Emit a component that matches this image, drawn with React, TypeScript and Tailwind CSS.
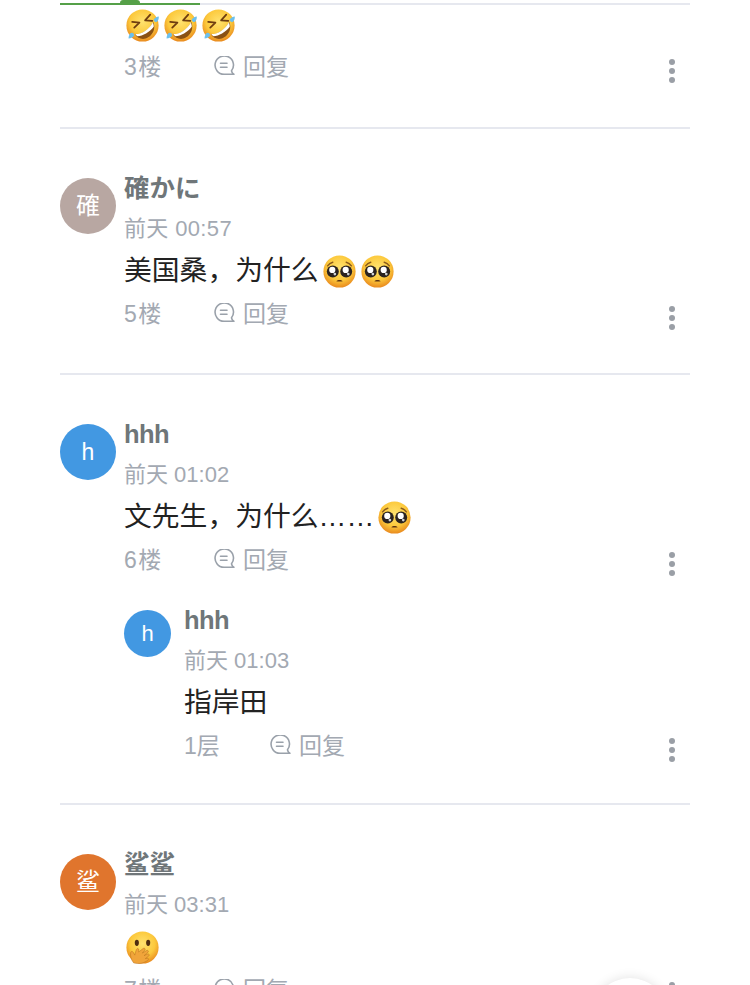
import { useId } from "react";

const FONT = "font-['Liberation_Sans','Noto_Sans_CJK_SC',sans-serif]";

function EmojiFace({ children }: { children: React.ReactNode }) {
    const id = useId();
    return (
        <svg viewBox="0 0 32 32" className="inline-block h-[33px] w-[33px] shrink-0">
            <defs>
                <radialGradient id={id} cx="50%" cy="38%" r="62%">
                    <stop offset="0%" stopColor="#ffe26f" />
                    <stop offset="62%" stopColor="#fcc93c" />
                    <stop offset="100%" stopColor="#e98a1e" />
                </radialGradient>
            </defs>
            <circle cx="16" cy="16" r="15.6" fill={`url(#${id})`} />
            {children}
        </svg>
    );
}

function Rofl() {
    return (
        <EmojiFace>
            <path d="M6 12.500l7 .6-5 5" fill="none" stroke="#6e3d10" strokeWidth="1.700" strokeLinecap="round" strokeLinejoin="round" />
            <path d="M23.500 5.500l-5 5.500 7 .5" fill="none" stroke="#6e3d10" strokeWidth="1.700" strokeLinecap="round" strokeLinejoin="round" />
            <path d="M8.500 24.500C15 25 23 19.500 26.500 12.500c2.500 6-.2 12-5 15-4.500 2.800-10 1.500-13-3z" fill="#8a5114" />
            <path d="M9 24.300C15.500 24.500 22.500 19.500 26 13c.8 1.800 1 3.200.9 4.300C22.800 22.500 16.500 26.200 11 26.500c-.8-.6-1.500-1.300-2-2.200z" fill="#fff" />
            <path d="M27 10c1.300-1.700 3-2.600 4.800-2.800.2 2-.4 4.300-2.100 5.300-1.400.7-3.200-1-2.700-2.500z" fill="#6cc0ee" />
            <path d="M5.500 23c1.400 0 2.500 1.300 2.200 2.700-.4 1.600-3 2.900-5.200 2.900-.2-2 1.200-5.600 3-5.600z" fill="#6cc0ee" />
        </EmojiFace>
    );
}

function Pleading() {
    return (
        <EmojiFace>
            <path d="M4.500 10.500c1.200-1.800 3-3 5-3.500 M27.500 10.500c-1.200-1.800-3-3-5-3.500" fill="none" stroke="#8a5a1c" strokeWidth="1.400" strokeLinecap="round" />
            <circle cx="9.500" cy="16" r="5.800" fill="#2b2320" />
            <circle cx="22.500" cy="16" r="5.800" fill="#2b2320" />
            <circle cx="9" cy="14.500" r="3" fill="#fff" />
            <circle cx="22" cy="14.500" r="3" fill="#fff" />
            <circle cx="11.500" cy="18.500" r="1.300" fill="#cfd3d6" />
            <circle cx="24.500" cy="18.500" r="1.300" fill="#cfd3d6" />
            <path d="M12.800 25.500c1.800-1.800 4.600-1.800 6.400 0-2 .4-4.400.4-6.400 0z" fill="#5e3210" />
        </EmojiFace>
    );
}

function HandOverMouth() {
    return (
        <EmojiFace>
            <ellipse cx="10.500" cy="11.500" rx="2" ry="3" fill="#4e2d10" />
            <ellipse cx="21.500" cy="11.500" rx="2" ry="3" fill="#4e2d10" />
            <path d="M7.500 31c-2.500-3-3.500-7-3-10 .3-1.500 2-1.500 2.600-.2l1.400 2.600c.5-2 1-4 1.600-5.500.6-1.400 2.400-1 2.300.5l-.2 2 4.500-3.500c1.200-.8 2.500.5 1.600 1.700l-2.500 2.800 4.200-2.500c1.300-.6 2.300.8 1.300 1.900l-3.800 3.100 3.600-1.600c1.300-.4 2 1 1 1.900l-3.400 2.600 2-.4c1.200-.1 1.500 1.300.5 1.900-2 1.500-5 3.100-8 3.200-2.500.1-4.400-.2-5.700-.5z" fill="#f0a43a" stroke="#b9701f" strokeWidth=".5" />
        </EmojiFace>
    );
}

function ReplyIcon() {
    return (
        <svg viewBox="0 0 22 20" className="-mt-[3px] h-5 w-[22px] shrink-0" fill="none" stroke="#9aa1aa" strokeWidth="1.600" strokeLinecap="round" strokeLinejoin="round">
            <path d="M18.500 14.800A9.200 9.200 0 1 0 11 18.300h10l-1.500-1.200c-.5-.6-.7-1.400-1-2.300z" />
            <path d="M7.500 7.300h6.500 M7.500 11.300h6.500" />
        </svg>
    );
}

function MoreDots() {
    return (
        <div className="mr-[15px] mt-[8px] flex flex-col gap-[3px]">
            <span className="h-1.5 w-1.5 rounded-full bg-[#9a9fa6]" />
            <span className="h-1.5 w-1.5 rounded-full bg-[#9a9fa6]" />
            <span className="h-1.5 w-1.5 rounded-full bg-[#9a9fa6]" />
        </div>
    );
}

function CommentFooter({ floor, nested }: { floor: string; nested?: boolean }) {
    return (
        <div className="flex h-11 items-center justify-between">
            <div className="flex items-center text-[23px] text-[#a3a9b2]">
                <span className={nested ? "w-[85px]" : "w-[89px] tracking-[1.5px]"}>{floor}</span>
                <ReplyIcon />
                <span className="ml-2">回复</span>
            </div>
            <MoreDots />
        </div>
    );
}

interface CommentBodyProps {
    name: React.ReactNode;
    time: React.ReactNode;
    floor: string;
    nested?: boolean;
    children: React.ReactNode;
}

function CommentBody({ name, time, floor, nested, children }: CommentBodyProps) {
    return (
        <div className="min-w-0 flex-1">
            <div className="flex h-[39px] items-center text-[25.500px] font-bold text-[#6f7679]">{name}</div>
            <div className="flex h-[41px] items-center pb-px text-[22px] text-[#a3a9b2]">{time}</div>
            <div className="flex h-11 items-center text-[27.800px] text-[#222]">{children}</div>
            <div className="-mt-px">
                <CommentFooter floor={floor} nested={nested} />
            </div>
        </div>
    );
}

const HHH = <span className="tracking-[-0.6px]">hhh</span>;

export default function App() {
    return (
        <div className={`relative h-[985px] w-[750px] overflow-hidden bg-white ${FONT}`}>
            <div className="px-[60px]">
                {/* Tab underline, mostly scrolled out of view */}
                <div className="relative mt-[3px] h-0.5 bg-[#e6e8ef]">
                    <div className="h-0.5 w-[140px] bg-[#55a048]" />
                    <div className="absolute left-[60px] top-[-3px] h-[3px] w-5 rounded-t-full bg-[#55a048]" />
                </div>

                <div className="border-b-2 border-[#e6e8ef] pb-[38px] pl-16">
                    <div className="ml-0.5 flex h-10 items-center gap-[5px] pt-px">
                        <Rofl />
                        <Rofl />
                        <Rofl />
                    </div>
                    <CommentFooter floor="3楼" />
                </div>

                <div className="flex border-b-2 border-[#e6e8ef] pb-[37px] pt-10">
                    <div className="mr-2 mt-[9px] flex h-14 w-14 shrink-0 items-center justify-center rounded-full bg-[#b8a7a2] text-2xl text-white">
                        確
                    </div>
                    <CommentBody
                        name="確かに"
                        time={<span className="tracking-[0.35px]">前天 00:57</span>}
                        floor="5楼"
                    >
                        美国桑，为什么
                        <span className="ml-1 flex gap-[5px]">
                            <Pleading />
                            <Pleading />
                        </span>
                    </CommentBody>
                </div>

                <div className="border-b-2 border-[#e6e8ef] pb-[35px] pt-10">
                    <div className="flex">
                        <div className="mr-2 mt-[9px] flex h-14 w-14 shrink-0 items-center justify-center rounded-full bg-[#4298e2] text-[23px] text-white">
                            h
                        </div>
                        <CommentBody name={HHH} time="前天 01:02" floor="6楼">
                            文先生，为什么……
                            <span className="ml-1 flex">
                                <Pleading />
                            </span>
                        </CommentBody>
                    </div>
                    {/* Reply nested under 6楼 */}
                    <div className="mt-[19px] flex pl-16">
                        <div className="mr-[13px] mt-[9px] flex h-[47px] w-[47px] shrink-0 items-center justify-center rounded-full bg-[#4298e2] text-[22px] text-white">
                            h
                        </div>
                        <CommentBody name={HHH} time="前天 01:03" floor="1层" nested>
                            指岸田
                        </CommentBody>
                    </div>
                </div>

                <div className="flex pt-10">
                    <div className="mr-2 mt-[9px] flex h-14 w-14 shrink-0 items-center justify-center rounded-full bg-[#e0752d] text-2xl text-white">
                        鲨
                    </div>
                    <CommentBody name="鲨鲨" time="前天 03:31" floor="7楼">
                        <span className="ml-0.5 flex">
                            <HandOverMouth />
                        </span>
                    </CommentBody>
                </div>
            </div>

            {/* Floating action button peeking in from the bottom */}
            <div className="absolute left-[592px] top-[978px] h-[76px] w-[76px] rounded-full bg-white shadow-[0_0_12px_rgba(0,0,0,0.12)]" />
        </div>
    );
}
